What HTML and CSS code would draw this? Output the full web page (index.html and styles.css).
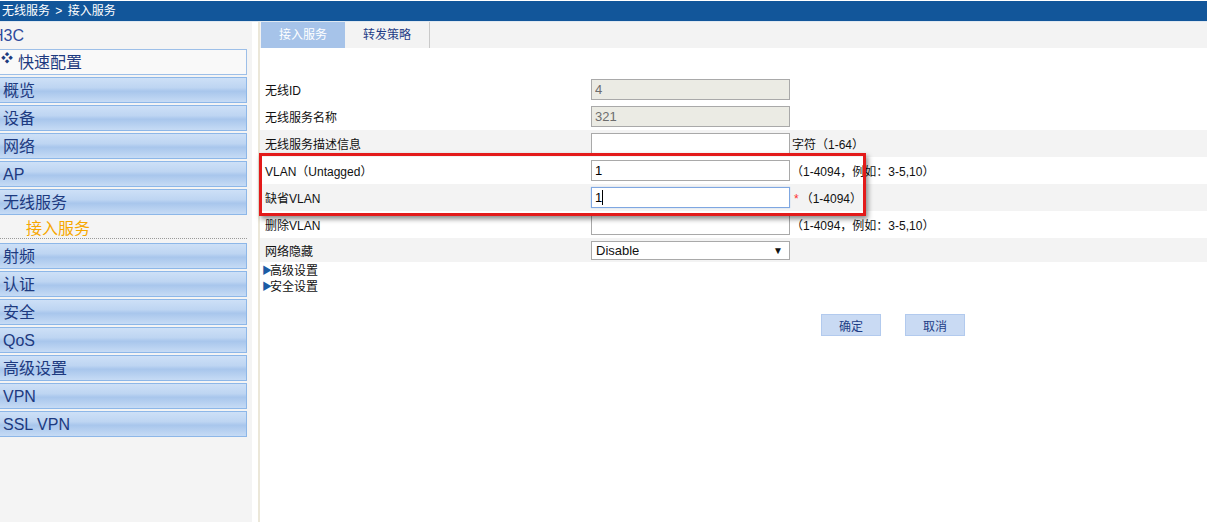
FILE: index.html
```html
<!DOCTYPE html>
<html lang="zh-CN">
<head>
    <meta charset="UTF-8">
    <title>接入服务</title>
    <link rel="stylesheet" href="styles.css">
</head>
<body>
    <div class="topbar">无线服务 &gt; 接入服务</div>

    <div class="main">
        <div class="sidebar">
            <div class="brand">H3C</div>
            <div class="quick"><span class="quick-icon">❖</span>快速配置</div>
            <div class="menu-item">概览</div>
            <div class="menu-item">设备</div>
            <div class="menu-item">网络</div>
            <div class="menu-item">AP</div>
            <div class="menu-item">无线服务</div>
            <div class="sub-item">接入服务</div>
            <div class="menu-item">射频</div>
            <div class="menu-item">认证</div>
            <div class="menu-item">安全</div>
            <div class="menu-item">QoS</div>
            <div class="menu-item">高级设置</div>
            <div class="menu-item">VPN</div>
            <div class="menu-item">SSL VPN</div>
        </div>

        <div class="content">
            <div class="tabs">
                <div class="tab active">接入服务</div>
                <div class="tab">转发策略</div>
            </div>

            <div class="form">
                <div class="row">
                    <div class="label">无线ID</div>
                    <input class="field disabled" type="text" value="4" disabled>
                </div>
                <div class="row">
                    <div class="label">无线服务名称</div>
                    <input class="field disabled" type="text" value="321" disabled>
                </div>
                <div class="row grey">
                    <div class="label">无线服务描述信息</div>
                    <input class="field" type="text" value="">
                    <span class="hint hint-tight">字符（1-64）</span>
                </div>
                <div class="row">
                    <div class="label">VLAN（Untagged）</div>
                    <input class="field" type="text" value="1">
                    <span class="hint">（1-4094，例如：3-5,10）</span>
                </div>
                <div class="row grey">
                    <div class="label">缺省VLAN</div>
                    <div class="field focused">1<span class="caret"></span></div>
                    <span class="hint"><span class="req">*</span>（1-4094）</span>
                </div>
                <div class="row">
                    <div class="label">删除VLAN</div>
                    <input class="field" type="text" value="">
                    <span class="hint">（1-4094，例如：3-5,10）</span>
                </div>
                <div class="row grey short">
                    <div class="label">网络隐藏</div>
                    <div class="select">Disable</div>
                </div>
            </div>

            <div class="links">
                <div class="link"><span class="arrow">▶</span>高级设置</div>
                <div class="link"><span class="arrow">▶</span>安全设置</div>
            </div>

            <div class="actions">
                <button class="btn">确定</button>
                <button class="btn">取消</button>
            </div>

            <div class="highlight"></div>
        </div>
    </div>
</body>
</html>
```

FILE: styles.css
```css
body {
    margin: 0;
    background-color: #ffffff;
    font-family: "Liberation Sans", "Noto Sans CJK SC", sans-serif;
    font-size: 12px;
    color: #111;
    overflow: hidden;
}
.topbar {
    margin-top: 1px;
    height: 20px;
    line-height: 20px;
    padding-left: 2px;
    background-color: #12569a;
    border-bottom: 1px solid #dfe8f1;
    color: #ffffff;
    font-size: 12px;
    word-spacing: 2px;
}
.main {
    display: flex;
    height: 500px;
}
.sidebar {
    width: 252px;
    background-color: #f4f4f4;
    flex-shrink: 0;
}
.brand {
    height: 27px;
    line-height: 27px;
    font-size: 16px;
    color: #2f4a9c;
    text-indent: -8px;
}
.quick {
    width: 246px;
    height: 24px;
    line-height: 25px;
    margin-left: -1px;
    background-color: #f9f9f9;
    border: 1px solid #9dbfe8;
    font-size: 16px;
    color: #1d3a80;
    margin-bottom: 2px;
}
.quick-icon {
    display: inline-block;
    width: 17px;
    font-size: 12px;
    font-weight: bold;
    color: #1d3a80;
    vertical-align: top;
    line-height: 18px;
    padding-left: 1px;
}
.menu-item {
    height: 24px;
    line-height: 26px;
    margin: 2px 0 0 -1px;
    padding-left: 3px;
    box-sizing: content-box;
    width: 243px;
    border: 1px solid #8db7e8;
    background: linear-gradient(#cde0f7, #bed5f2 40%, #a8c6ec 55%, #c6dbf5);
    font-size: 16px;
    color: #1d3a80;
}
.sub-item {
    width: 247px;
    height: 24px;
    line-height: 28px;
    margin-bottom: 4px;
    padding-left: 26px;
    box-sizing: border-box;
    border-bottom: 1px dotted #9a9a9a;
    font-size: 16px;
    color: #f6a700;
}
.sub-item + .menu-item {
    margin-top: 4px;
}
.content {
    position: relative;
    flex: 1;
    margin-left: 6px;
    border-left: 2px solid #ebe7d9;
}
.tabs {
    display: flex;
    height: 26px;
    background-color: #f3f3f3;
    padding-left: 1px;
}
.tab {
    width: 84px;
    line-height: 26px;
    text-align: center;
    color: #1f3c86;
    font-size: 12px;
}
.tab + .tab {
    width: 84px;
    border-right: 1px solid #c9c9c9;
}
.tab.active {
    background-color: #a6c3e9;
    color: #ffffff;
}
.form {
    margin-top: 28px;
}
.row {
    display: flex;
    align-items: center;
    height: 27px;
}
.row.short {
    height: 24px;
}
.row.grey {
    background-color: #f3f3f3;
}
.label {
    width: 326px;
    padding-left: 5px;
    flex-shrink: 0;
}
.field {
    width: 199px;
    height: 21px;
    box-sizing: border-box;
    border: 1px solid #a9a9a9;
    background-color: #ffffff;
    padding: 0 3px;
    margin: 0;
    font-family: "Liberation Sans", sans-serif;
    font-size: 13px;
    line-height: 19px;
    color: #000;
    outline: none;
}
.field.disabled {
    background-color: #ebebe4;
    color: #6d6d6d;
}
.field.focused {
    border-color: #7fa7e1;
    box-shadow: 0 0 1px #9fc0ec;
}
.caret {
    display: inline-block;
    width: 1px;
    height: 15px;
    background-color: #000;
    vertical-align: -3px;
}
.hint {
    margin-left: 1px;
}
.hint-tight {
    margin-left: 2px;
}
.req {
    color: #ff3030;
    margin-right: 2px;
    margin-left: 3px;
}
.select {
    position: relative;
    width: 199px;
    height: 19px;
    box-sizing: border-box;
    border: 1px solid #a9a9a9;
    background-color: #ffffff;
    padding-left: 4px;
    font-size: 13px;
    line-height: 17px;
}
.select::after {
    content: "▼";
    position: absolute;
    right: 6px;
    top: 0;
    font-size: 10px;
    color: #111;
}
.links {
    margin-top: 1px;
    padding-left: 2px;
}
.link {
    line-height: 16px;
    height: 16px;
}
.arrow {
    color: #1b5ca5;
    font-size: 10px;
    display: inline-block;
    width: 8px;
    vertical-align: 1px;
}
.actions {
    display: flex;
    gap: 24px;
    padding-left: 561px;
    margin-top: 19px;
}
.btn {
    width: 60px;
    height: 22px;
    border: 1px solid #b2caee;
    background-color: #c9daf3;
    color: #1d3d86;
    font-family: "Liberation Sans", "Noto Sans CJK SC", sans-serif;
    font-size: 12px;
    padding: 0;
}
.highlight {
    position: absolute;
    left: -1px;
    top: 131px;
    width: 601px;
    height: 57px;
    border: 3px solid #e31a1a;
    box-shadow: 2px 3px 5px rgba(0, 0, 0, 0.45);
}
```
